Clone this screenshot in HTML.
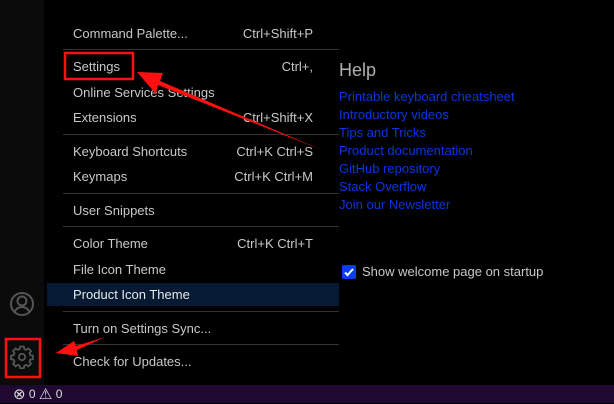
<!DOCTYPE html>
<html><head><meta charset="utf-8"><style>
*{margin:0;padding:0;box-sizing:border-box}
body{width:614px;height:403px;background:#000;position:relative;overflow:hidden;font-family:"Liberation Sans",sans-serif;font-size:13px;color:#c8c8c8}
.ab{position:absolute;left:0;top:0;width:44px;height:385px;background:#0b0b0b}
.menu{position:absolute;left:47px;top:19px;width:292px;height:366px;background:#000}
.it{position:absolute;left:26px;right:26px;height:24px;line-height:24px;white-space:nowrap}
.it span{position:absolute;right:0;top:0}
.sep{position:absolute;left:16px;right:0;height:1px;background:#333}
.hl{position:absolute;left:0;right:0;top:264px;height:23px;background:#061a33}
.help{position:absolute;left:339px;top:60px;font-size:18px;color:#b0b0b0}
.links{position:absolute;left:339px;top:88px;line-height:18px;font-size:13px;color:#0836e0}
.cb{position:absolute;left:342px;top:265px;width:14px;height:14px;background:#0b3ef0;border-radius:2px}
.cbl{position:absolute;left:362px;top:264px;font-size:13px;color:#c8c8c8}
.sb{position:absolute;left:0;top:385px;width:614px;height:18px;background:#1f0933;color:#ddd;font-size:12px;line-height:18px;padding-left:13px}
.sb b{font-weight:normal;font-size:15px;vertical-align:-1px}
</style></head><body>
<div class="ab">
<svg style="position:absolute;left:9px;top:291px" width="26" height="26" viewBox="0 0 26 26" fill="none" stroke="#555" stroke-width="2"><circle cx="13" cy="13" r="11"/><circle cx="13" cy="10" r="4.5"/><path d="M5.5 21c2-4 5-5 7.5-5s5.5 1 7.5 5"/></svg>
<svg style="position:absolute;left:10px;top:345px" width="24" height="24" viewBox="0 0 24 24" fill="none" stroke="#555" stroke-width="1.8"><path d="M10.2 1.5h3.6l.5 2.6 1.9.8 2.2-1.5 2.6 2.6-1.5 2.2.8 1.9 2.6.5v3.6l-2.6.5-.8 1.9 1.5 2.2-2.6 2.6-2.2-1.5-1.9.8-.5 2.6h-3.6l-.5-2.6-1.9-.8-2.2 1.5-2.6-2.6 1.5-2.2-.8-1.9-2.6-.5v-3.6l2.6-.5.8-1.9-1.5-2.2 2.6-2.6 2.2 1.5 1.9-.8z"/><circle cx="12" cy="12" r="3.2"/></svg>
</div>
<div class="menu">
<div class="hl"></div>
<div class="it" style="top:3px">Command Palette...<span>Ctrl+Shift+P</span></div>
<div class="sep" style="top:30px"></div>
<div class="it" style="top:36px">Settings<span>Ctrl+,</span></div>
<div class="it" style="top:62px">Online Services Settings</div>
<div class="it" style="top:87px">Extensions<span>Ctrl+Shift+X</span></div>
<div class="sep" style="top:115px"></div>
<div class="it" style="top:121px">Keyboard Shortcuts<span>Ctrl+K Ctrl+S</span></div>
<div class="it" style="top:146px">Keymaps<span>Ctrl+K Ctrl+M</span></div>
<div class="sep" style="top:174px"></div>
<div class="it" style="top:180px">User Snippets</div>
<div class="sep" style="top:207px"></div>
<div class="it" style="top:213px">Color Theme<span>Ctrl+K Ctrl+T</span></div>
<div class="it" style="top:239px">File Icon Theme</div>
<div class="it" style="top:264px;color:#e8e8e8">Product Icon Theme</div>
<div class="sep" style="top:292px"></div>
<div class="it" style="top:298px">Turn on Settings Sync...</div>
<div class="sep" style="top:325px"></div>
<div class="it" style="top:331px">Check for Updates...</div>
</div>
<div class="help">Help</div>
<div class="links">Printable keyboard cheatsheet<br>Introductory videos<br>Tips and Tricks<br>Product documentation<br>GitHub repository<br>Stack Overflow<br>Join our Newsletter</div>
<div class="cb"><svg width="14" height="14" viewBox="0 0 14 14"><path d="M3 7.5l2.5 2.5L11 4" stroke="#fff" stroke-width="2" fill="none"/></svg></div>
<div class="cbl">Show welcome page on startup</div>
<div class="sb"><b>⊗</b> 0 <b>⚠</b> 0</div>
<svg style="position:absolute;left:0;top:0" width="614" height="403">
<rect x="65" y="53" width="68" height="26" fill="none" stroke="#ff1010" stroke-width="2.5"/>
<rect x="6" y="339" width="34" height="38" fill="none" stroke="#ff1010" stroke-width="2.5"/>
<path d="M322 150 L160 81 L163 73 L137 72 L156 94 L158 85 Z" fill="#ff1010"/>
<path d="M105 337 L76 346 L74 341 L56 353 L78 356 L77 350 Z" fill="#ff1010"/>
</svg>
</body></html>
